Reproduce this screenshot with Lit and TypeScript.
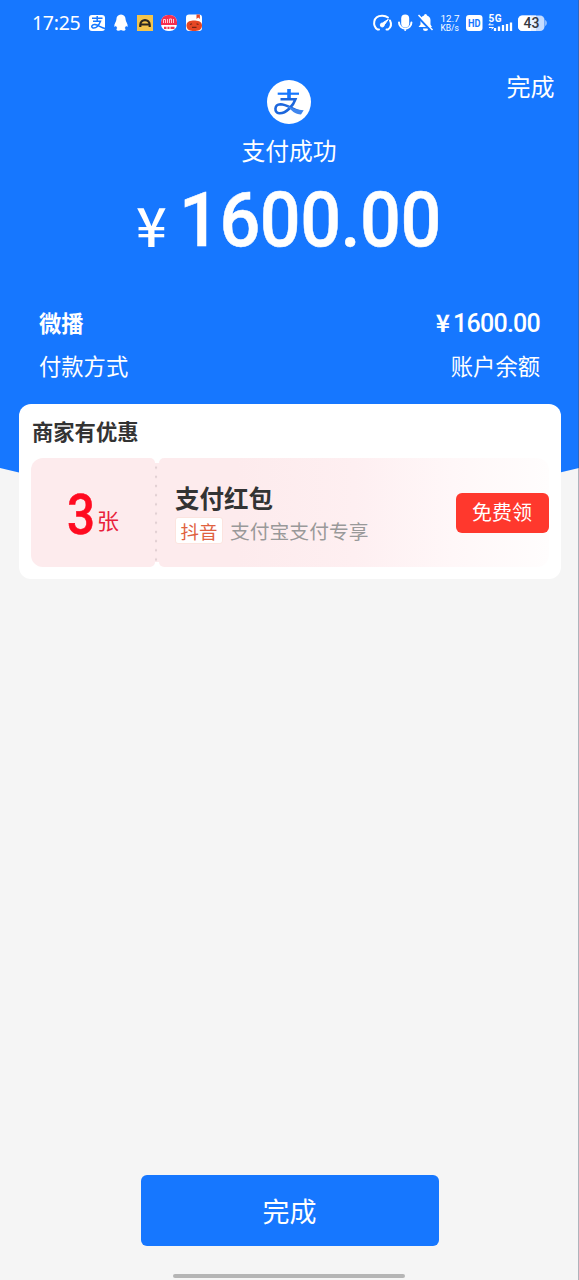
import { LitElement, html, css } from "lit";
import { customElement } from "lit/decorators.js";

@customElement("status-bar")
class StatusBar extends LitElement {
  static styles = css`
    :host { display: flex; justify-content: space-between; height: 46px; padding: 0 31px 0 32px; color: #fff; font-family: "Noto Sans", sans-serif; }
    .side { display: flex; align-items: center; }
    .time { font-size: 19.500px; width: 56px; letter-spacing: -0.3px; margin-top: -2px; }
    svg { display: block; flex: none; }
  `;
  render() {
    return html`
      <div class="side">
        <span class="time">17:25</span>
        <svg width="116" height="20" viewBox="88 13 116 20">
          <rect x="89" y="15" width="16" height="16" rx="3" fill="#fff" />
          <path d="M92 18.300h10.500M97.200 16v5M93 21.300h7.500C99 25 96 28.500 93 28C90.500 27 92 24.200 95 24.500C98 25 101 27.500 105 28.500" fill="none" stroke="#1677ff" stroke-width="1.500" />
          <path d="M121 14.500c-3 0-4.600 2.200-4.600 5c0 2-2.400 4-2.100 7c.4.500 1.200-.2 1.700-.8c.2 1 .6 1.800 1.300 2.400c-1.500 1-1 2.700 1 2.700c1.200 0 2-.3 2.700-.8c.7.500 1.500.8 2.700.8c2 0 2.500-1.700 1-2.700c.7-.6 1.100-1.400 1.300-2.400c.5.600 1.300 1.300 1.700.8c.3-3-2.100-5-2.100-7c0-2.800-1.600-5-4.600-5z" fill="#fff" />
          <rect x="137" y="15" width="16" height="16" fill="#f3c44c" />
          <path d="M140.300 27v-2c0-6.500 9.400-6.500 9.400 0v2M141 24.500h8" fill="none" stroke="#282521" stroke-width="2.200" />
          <rect x="161" y="15" width="16" height="16" rx="7" fill="#fff" />
          <path d="M161 25v-3a7 7 0 0 1 7-7h2a7 7 0 0 1 7 7v3z" fill="#f52f50" />
          <path d="M163.500 23v-3.500h2v3.500M167.500 19v4M169.500 23v-4h2v4M173.500 19v4" fill="none" stroke="#ffdce2" stroke-width=".9" />
          <path d="M164 27.800h2.500M167.500 27.800h2M170.500 27.800h4" stroke="#ed3551" stroke-width="2.200" />
          <rect x="186" y="14.500" width="16" height="16.500" rx="3" fill="#fff" />
          <path d="M186.500 25.500c0-4.500 4.500-5 7.500-5s8 .5 8 5-4 5.500-8 5.500-7.500-1-7.500-5.500z" fill="#e64725" />
          <path d="M196.500 14.500v4.500l1.700-1.500 1.700 1.500v-4.500z" fill="#e64725" />
          <path d="M190 24.500l2-.8M198.500 24.500l-2-.8M192 27.300h4.500" stroke="#742515" stroke-width="1.200" />
        </svg>
      </div>
      <div class="side">
        <svg width="176" height="22" viewBox="372 12 176 22">
          <g fill="none" stroke="#fff" stroke-width="2" stroke-linecap="round">
            <path d="M379 29.500h-1.500C372.500 26 372.500 16 382 15.700C384.500 15.600 386.500 16.300 388 17.500M390 20.500C391.800 24 390.800 27.500 388 29.500H386.500" />
            <path d="M388 19.500l-5.500 3.500a2 2 0 1 0 1.800 2.200z" fill="#fff" stroke-width="1" />
            <path d="M399 22.500a6.200 6.200 0 0 0 12.400 0M405.200 29v1" />
          </g>
          <rect x="401.200" y="14.500" width="8" height="13" rx="4" fill="#fff" />
          <path d="M418.500 27h13.500l-1.500-2.500V20a5 5 0 0 0-3.500-4.500a1.500 1.500 0 0 0-3 0a5 5 0 0 0-3.500 4.500v4.500zM423 28.500h5a2.500 2.500 0 0 1-5 0z" fill="#fff" />
          <path d="M417.500 16.500l14 14.500" stroke="#1677ff" stroke-width="2.400" />
          <path d="M418.500 15l14 15" stroke="#fff" stroke-width="1.500" />
          <g fill="#fff" font-family="Roboto, sans-serif">
            <text x="440.500" y="21.800" font-size="9.800" textLength="19">12.7</text>
            <text x="440.500" y="31" font-size="8.800" textLength="18.500" lengthAdjust="spacingAndGlyphs">KB/s</text>
            <text x="488.500" y="21.800" font-size="10" font-weight="700" textLength="13">5G</text>
          </g>
          <rect x="466" y="15" width="16.500" height="16" rx="3" fill="#fff" />
          <text x="468" y="26.900" font-size="10.500" font-weight="700" textLength="12.500" lengthAdjust="spacingAndGlyphs" font-family="Roboto, sans-serif" fill="#1677ff">HD</text>
          <path d="M489 24.800h4.500M490.500 23.200l-2 1.600M489 27.500h4.500M491.500 29l2-1.500" stroke="#fff" stroke-width="1" />
          <path d="M495 31v-3M499 31v-4.500M503 31v-6M507 31v-7M511 31v-8.500" stroke="#fff" stroke-width="2.300" />
          <rect x="518" y="15.500" width="26.500" height="15.500" rx="4.500" fill="#c5dcff" />
          <path d="M522.500 15.500H531v15.500h-8.500a4.500 4.500 0 0 1-4.500-4.500v-6.500a4.500 4.500 0 0 1 4.500-4.500z" fill="#fff" />
          <path d="M531 15.500h5v15.500h-5z" fill="#eaf2ff" />
          <path d="M545.300 20c1.800 1 1.800 5 0 6z" fill="#c5dcff" />
          <text x="523.500" y="28.200" font-size="14" textLength="16" font-weight="500" font-family="Roboto, sans-serif" fill="#34383f">43</text>
        </svg>
      </div>`;
  }
}

@customElement("coupon-card")
class CouponCard extends LitElement {
  static styles = css`
    :host { display: block; box-sizing: border-box; height: 175px; margin: 0 18.500px 0 19px; padding: 12px 12px 0; border-radius: 12px; background: #fff; color: #333; }
    .title { height: 32px; line-height: 30px; font-size: 21.300px; font-weight: 700; margin-left: 1px; }
    .coupon { display: flex; height: 109px; margin-top: 10px; }
    .count { width: 124px; box-sizing: border-box; border-radius: 12px 5px 5px 12px; background: #fdebed; display: flex; padding-left: 36px; color: #ff0a20; }
    .num { font: 500 56px/115px Roboto, sans-serif; width: 30px; transform-origin: 0 50%; transform: scaleX(0.88); -webkit-text-stroke: 0.6px #ff0a20; }
    .unit { font-size: 22px; line-height: 122px; color: #e9203a; }
    .dots { width: 4px; flex: none; margin: 5px 0; background: radial-gradient(circle at 1px 4.600px, #e2d0d3 1px, #fdebed 1.600px) 0 0 / 4px 9.200px; }
    .detail { flex: 1; display: flex; align-items: center; border-radius: 5px 12px 12px 5px; background: linear-gradient(90deg, #fdebed 20%, #feeff1 50%, #fff7f8 75%, #fffdfd 100%); padding-left: 16px; }
    .text { flex: 1; }
    .name { font-size: 24.500px; line-height: 34px; font-weight: 700; }
    .sub { display: flex; align-items: center; gap: 7px; height: 27px; font-size: 19.800px; color: #999; margin-top: 2px; }
    .tag { box-sizing: border-box; width: 48px; height: 27px; line-height: 26px; text-align: center; font-size: 18.500px; border-radius: 3px; background: #fff; border: 1px solid #fce4df; color: #df623f; }
    .get { width: 93px; height: 40px; line-height: 38px; border-radius: 6px; background: #ff382d; color: #fff; font-size: 20px; text-align: center; }
  `;
  render() {
    return html`
      <div class="title">商家有优惠</div>
      <div class="coupon">
        <div class="count"><span class="num">3</span><span class="unit">张</span></div>
        <div class="dots"></div>
        <div class="detail">
          <div class="text">
            <div class="name">支付红包</div>
            <div class="sub"><span class="tag">抖音</span><span>支付宝支付专享</span></div>
          </div>
          <div class="get">免费领</div>
        </div>
      </div>`;
  }
}

@customElement("app-root")
class AppRoot extends LitElement {
  static styles = css`
    :host { display: block; font-family: "Noto Sans CJK SC", sans-serif; }
    .screen { position: relative; display: flex; flex-direction: column; width: 579px; height: 1280px; overflow: hidden; background: #f5f5f5; }
    .screen::after { content: ""; position: absolute; top: 0; right: 0; width: 1px; height: 100%; background: rgba(70, 80, 100, 0.4); }
    .hero { height: 474px; flex: none; background: #1677ff; color: #fff; clip-path: polygon(0 0, 100% 0, 100% 468px, 560px 472.500px, 19px 472.500px, 0 468px); display: flex; flex-direction: column; }
    .nav { height: 34px; display: flex; justify-content: flex-end; }
    .done { margin: 23px 24.500px 0 0; font-size: 24px; line-height: 34px; }
    .brand { align-self: center; display: block; margin-right: 1px; }
    .state { text-align: center; font-size: 23.800px; line-height: 34px; margin: 9px 1px 0 0; }
    .amount { display: flex; height: 90px; margin-top: 6px; padding-left: 137px; }
    .total { font: 500 76.500px/94px Roboto, sans-serif; letter-spacing: -0.5px; transform-origin: 0 50%; transform: scaleX(0.94); -webkit-text-stroke: 0.5px #fff; }
    .yen { width: 43px; font-size: 54px; line-height: 102px; font-weight: 500; margin-left: -1px; }
    .rows { margin-top: 38px; }
    .row { display: flex; justify-content: space-between; padding: 0 39px; height: 43px; line-height: 43px; font-size: 22.300px; }
    .strong { font-weight: 700; }
    .sum { font: 500 25px/45px Roboto, sans-serif; letter-spacing: -0.75px; display: flex; }
    .sum .y { font: 700 24px/42px "Noto Sans CJK SC", sans-serif; margin-right: 4px; }
    coupon-card { margin-top: -70px; position: relative; }
    .finish { align-self: center; margin-top: auto; width: 298px; height: 71px; line-height: 72px; border-radius: 6px; background: #1677ff; color: #fff; font-size: 27px; text-align: center; flex: none; }
    .home { align-self: center; flex: none; width: 232px; height: 4px; border-radius: 2px; background: #b5b5b5; margin: 28px 1px 2px 0; }
  `;
  render() {
    return html`
      <div class="screen">
        <div class="hero">
          <status-bar></status-bar>
          <div class="nav"><span class="done">完成</span></div>
          <svg class="brand" width="44" height="44" viewBox="0 0 44 44">
            <circle cx="22" cy="22" r="22" fill="#fff" />
            <path d="M10.700 13.700h21.300" stroke="#1677ff" stroke-width="2.200" />
            <path d="M20.200 9h3.600v10h-3.600z" fill="#1677ff" />
            <path d="M13.500 19.200h15C26.500 25.500 19 33.800 12.200 33.300C7 32.800 7 24.500 13.500 24.300C20 24.300 25 29.500 33 31.500" fill="none" stroke="#1c66dc" stroke-width="2.600" />
            <path d="M20 25.500c6 3.200 10 4.600 16.700 4.700l-2.700 4.300c-5.500 0-10-4-14-9z" fill="#3f86ee" />
          </svg>
          <div class="state">支付成功</div>
          <div class="amount"><span class="yen">¥</span><span class="total">1600.00</span></div>
          <div class="rows">
            <div class="row"><span class="strong">微播</span><span class="sum"><span class="y">¥</span>1600.00</span></div>
            <div class="row"><span>付款方式</span><span>账户余额</span></div>
          </div>
        </div>
        <coupon-card></coupon-card>
        <div class="finish">完成</div>
        <div class="home"></div>
      </div>`;
  }
}
